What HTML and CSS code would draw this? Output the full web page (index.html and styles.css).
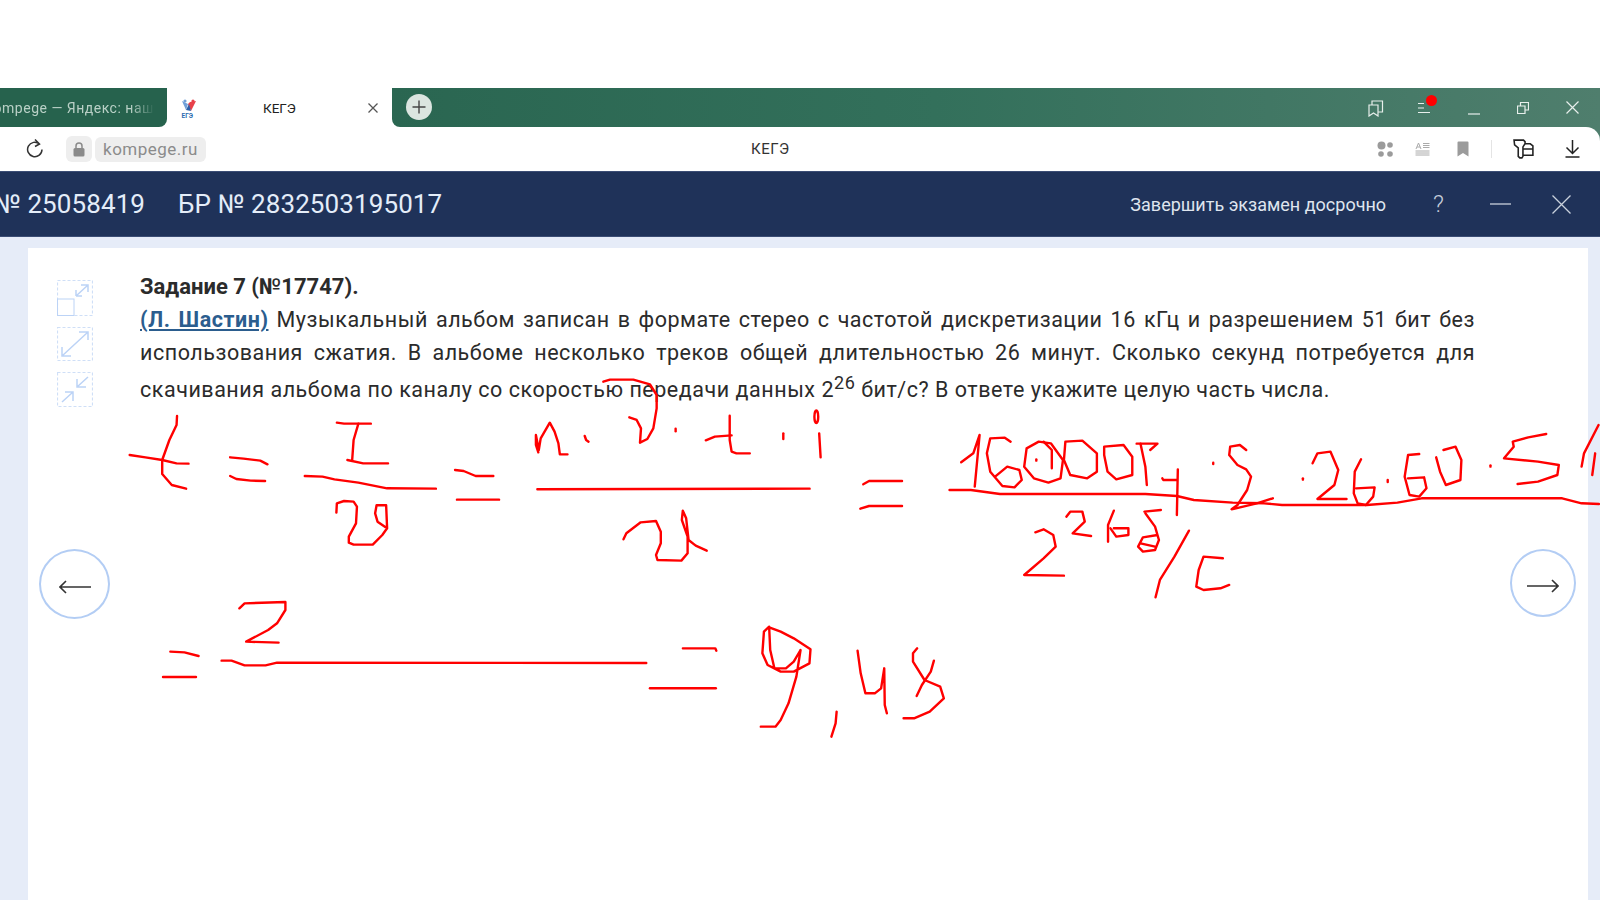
FILE: index.html
```html
<!DOCTYPE html>
<html lang="ru">
<head>
    <meta charset="UTF-8">
    <title>КЕГЭ</title>
    <link rel="stylesheet" href="styles.css">
</head>
<body>
    <div class="blank"></div>

    <div class="tabbar">
        <div class="tab-old"><span class="tab-old-text">kompege — Яндекс: нашлось</span></div>
        <div class="tab-active">
            <svg class="favicon" width="16" height="20" viewBox="0 0 16 20">
                <circle cx="4" cy="3" r="1.6" fill="#6f9fd8"/>
                <circle cx="12" cy="3" r="1.6" fill="#e8404a"/>
                <path d="M1 3 L5 12 L7 6Z" fill="#6f9fd8"/>
                <path d="M15 3 L10 13 L7 6 L9 4Z" fill="#e8404a"/>
                <path d="M5 12 L10 13 L8 6Z" fill="#2b5ea8"/>
                <text x="0.5" y="19.5" class="favicon-text">ЕГЭ</text>
            </svg>
            <span class="tab-title">КЕГЭ</span>
            <svg class="tab-close" width="12" height="12" viewBox="0 0 12 12"><path d="M1.5 1.5 L10.5 10.5 M10.5 1.5 L1.5 10.5"/></svg>
        </div>
        <div class="tab-rest">
            <div class="tab-new">
                <svg width="14" height="14" viewBox="0 0 14 14"><path d="M7 0.5 V13.5 M0.5 7 H13.5"/></svg>
            </div>
            <div class="win-icons">
                <svg class="win-icon" width="16" height="18" viewBox="0 0 16 18"><path d="M1 6 H10 V17 L5.5 14 L1 17Z M4 6 V2 H14.5 V13 H10"/></svg>
                <div class="menu-icon">
                    <svg width="13" height="12" viewBox="0 0 13 12"><path d="M0 1.5 H6 M0 6 H6 M0 10.5 H12"/></svg>
                    <span class="red-dot"></span>
                </div>
                <svg class="win-icon win-min" width="12" height="12" viewBox="0 0 12 12"><path d="M0 11 H12"/></svg>
                <svg class="win-icon" width="12" height="12" viewBox="0 0 12 12"><path d="M0.5 4 H8 V11.5 H0.5Z M3.5 4 V0.5 H11.5 V8 H8"/></svg>
                <svg class="win-icon" width="13" height="13" viewBox="0 0 13 13"><path d="M0.5 0.5 L12.5 12.5 M12.5 0.5 L0.5 12.5"/></svg>
            </div>
        </div>
    </div>

    <div class="toolbar-bg">
        <div class="toolbar">
            <svg class="reload" width="18" height="20" viewBox="0 0 18 20"><path d="M13.5 5 A7.2 7.2 0 1 0 16 10.5 M9 0.5 L13.5 5 L9 7.5"/></svg>
            <div class="lock">
                <svg width="12" height="15" viewBox="0 0 12 15"><path d="M3 7 V4 A3 3 0 0 1 9 4 V7" class="lock-arc"/><rect x="0.5" y="6" width="11" height="8.5" rx="1.5"/></svg>
            </div>
            <div class="url">kompege.ru</div>
            <div class="page-title">КЕГЭ</div>
            <div class="tool-icons">
                <svg width="16" height="16" viewBox="0 0 16 16" class="gray-icon"><circle cx="4.5" cy="4.5" r="4"/><circle cx="13" cy="4" r="2.8"/><circle cx="4" cy="13" r="2.8"/><circle cx="13" cy="13" r="2.8"/></svg>
                <svg width="15" height="14" viewBox="0 0 15 14" class="lines-icon"><path d="M1 7 L3.5 1 L6 7 M2 5 H5 M8 1.5 H14.5 M8 3.5 H14.5 M8 5.5 H14.5 M0.5 9 H14.5 M0.5 11 H14.5 M0.5 13 H14.5"/></svg>
                <svg width="12" height="16" viewBox="0 0 12 16" class="gray-icon book-icon"><path d="M0.5 1.5 Q0.5 0.5 1.5 0.5 H10.5 Q11.5 0.5 11.5 1.5 V15.5 L6 12 L0.5 15.5Z"/></svg>
                <span class="tool-sep"></span>
                <svg width="22" height="22" viewBox="0 0 21 20" class="dark-icon key-icon"><path d="M1 1.5 H10 L11.5 3 V5 L9.5 8 V17 L8.5 18.5 H6.5 L5 17 V9 L1.5 6 Z M11 5 H16.5 L19 7 V16 H9.5 M9.5 10 H19"/></svg>
                <svg width="15" height="18" viewBox="0 0 15 18" class="dark-icon dl-icon"><path d="M7.5 0 V13 M1.5 7.5 L7.5 13.5 L13.5 7.5 M0.5 17 H14.5"/></svg>
            </div>
        </div>
    </div>

    <header class="examhead">
        <span class="exam-num">№ 25058419</span>
        <span class="exam-br">БР № 2832503195017</span>
        <span class="exam-finish">Завершить экзамен досрочно</span>
        <span class="exam-help">?</span>
        <svg class="exam-min" width="21" height="2" viewBox="0 0 21 2"><path d="M0 1 H21"/></svg>
        <svg class="exam-close" width="19" height="19" viewBox="0 0 19 19"><path d="M0.5 0.5 L18.5 18.5 M18.5 0.5 L0.5 18.5"/></svg>
    </header>

    <main class="main">
        <div class="card">
            <div class="side">
                <div class="zoom-tools">
                    <svg class="zoom-box" width="36" height="36" viewBox="0 0 36 36"><rect class="dash" x="0.5" y="0.5" width="35" height="35"/><rect class="solid thin" x="0.5" y="19" width="16.5" height="16.5"/><path class="solid" d="M19 16 L31 5 M24 5 H31 V12 M19 16 V10 M19 16 H25"/></svg>
                    <svg class="zoom-box" width="36" height="34" viewBox="0 0 36 34"><rect class="dash" x="0.5" y="0.5" width="35" height="33"/><path class="solid" d="M5 29 L31 5 M22 5 H31 V13 M5 20 V29 H14"/></svg>
                    <svg class="zoom-box" width="36" height="35" viewBox="0 0 36 35"><rect class="dash" x="0.5" y="0.5" width="35" height="34"/><path class="solid" d="M31 5 L20 15 M20 7 V15 H29 M5 30 L16 20 M8 20 H16 V29"/></svg>
                </div>
                <div class="nav-circle">
                    <svg width="32" height="14" viewBox="0 0 32 14"><path d="M32 7 H1 M7 1 L1 7 L7 13"/></svg>
                </div>
            </div>
            <div class="task">
                <div class="task-title">Задание 7 (№17747).</div>
                <p class="task-text"><a class="author" href="#">(Л. Шастин)</a> Музыкальный альбом записан в формате стерео с частотой дискретизации 16 кГц и разрешением 51 бит без использования сжатия. В альбоме несколько треков общей длительностью 26 минут. Сколько секунд потребуется для скачивания альбома по каналу со скоростью передачи данных 2<sup>26</sup> бит/с? В ответе укажите целую часть числа.</p>
            </div>
            <div class="side-right">
                <div class="nav-circle nav-next">
                    <svg width="32" height="14" viewBox="0 0 32 14"><path d="M0 7 H31 M25 1 L31 7 L25 13"/></svg>
                </div>
            </div>
        </div>
    </main>

    <!-- handwritten notes on top of the page -->
    <svg class="ink" width="1600" height="900" viewBox="0 0 1600 900">
        <g transform="translate(100 400) scale(0.4785 0.3333)">
            <polyline points="161,48 160,75 145,120 130,180 130,222 150,255 180,266"/>
            <polyline points="62,165 95,172 130,180 160,190 185,191"/>
            <polyline points="272,172 300,176 335,182 350,193"/>
            <polyline points="272,228 285,237 315,242 345,243"/>
            <polyline points="495,68 510,71 566,71"/>
            <polyline points="540,71 530,120 527,180"/>
            <polyline points="517,180 550,190 602,190"/>
            <polyline points="428,228 465,230 490,238 540,248 600,265 702,266"/>
            <polyline points="494,338 495,310 510,303 530,305 537,320 535,370 520,410 520,428 530,434 570,434 590,405 600,385 580,365 575,340 578,316 598,316 600,385"/>
            <polyline points="742,210 760,213 785,228 822,228"/>
            <polyline points="746,299 834,299"/>
            <polyline points="916,157 911,135 911,105 917,150 921,115 940,68 950,95 958,130 961,163 977,163"/>
            <polyline points="1013,108 1016,120 1021,125"/>
            <polyline points="1203,86 1203,94"/>
            <polyline points="1428,100 1428,117"/>
            <polyline points="1316,47 1316,120 1320,155 1330,160 1358,160"/>
            <polyline points="1266,121 1285,110 1320,106"/>
            <ellipse cx="1497" cy="50" rx="4" ry="19"/>
            <polyline points="1503,100 1506,172"/>
            <polyline points="914,268 1483,266"/>
            <polyline points="1094,418 1100,400 1130,367 1162,363 1172,395 1172,430 1162,465 1165,480 1215,482 1228,460 1228,410 1216,360 1218,332 1225,355 1230,420 1245,437 1268,452"/>
        </g>
        <g transform="translate(560 365) scale(0.3333)">
            <polyline points="130,50 150,44 220,44 270,58 290,90 290,130 280,190 262,222 240,233 243,190 230,165 208,157"/>
        </g>
        <g transform="translate(840 400) scale(0.4847 0.3333)">
            <polyline points="48,253 60,243 128,243"/>
            <polyline points="42,326 60,318 128,318"/>
            <polyline points="250,187 275,160 288,105 278,260"/>
            <polyline points="352,125 340,113 310,115 303,160 310,215 335,258 360,262 375,240 370,210 345,200 320,230"/>
            <polyline points="410,125 385,145 380,200 400,235 430,248 455,235 460,180 435,130 410,125"/>
            <polyline points="420,125 437,150 437,205"/>
            <polyline points="465,125 500,122 530,160 530,215 510,235 475,225 462,180 465,125"/>
            <polyline points="545,140 585,135 603,170 603,225 570,238 552,215 545,165 545,140"/>
            <polyline points="612,131 655,131 640,150"/>
            <polyline points="620,131 630,200 633,255"/>
            <polyline points="665,235 667,240 695,240"/>
            <polyline points="697,208 695,345"/>
            <polyline points="226,270 270,270 330,282 630,282 695,288 730,300 810,308 875,310 912,315 1087,315 1150,308 1200,295 1490,295 1530,310 1566,312"/>
            <polyline points="838,150 825,135 805,140 803,165 820,195 838,208 848,230 840,270 820,315 808,328 860,310 893,295"/>
            <polyline points="770,188 770,192"/>
            <polyline points="955,235 955,239"/>
            <polyline points="1130,240 1130,246"/>
            <polyline points="1342,196 1342,200"/>
            <polyline points="405,178 405,182"/>
            <polyline points="975,190 985,160 1012,155 1028,210 1020,255 985,297 1045,297"/>
            <polyline points="1075,178 1062,215 1060,280 1068,310 1085,315 1100,290 1103,262 1065,265"/>
            <polyline points="1195,162 1172,165 1165,230 1175,285 1195,290 1210,265 1205,232 1172,235"/>
            <polyline points="1245,150 1270,140 1282,180 1280,240 1250,255 1238,215 1230,172"/>
            <polyline points="1457,102 1420,112 1388,125 1390,140 1370,175 1440,185 1483,195 1480,225 1440,245 1398,252"/>
            <polyline points="1565,75 1535,160 1530,200"/>
            <polyline points="1552,225 1558,160"/>
            <polyline points="403,397 420,388 440,405 445,440 420,475 380,525 462,527"/>
            <polyline points="467,350 475,335 500,335 505,365 480,400 518,408"/>
            <polyline points="565,332 553,375 553,425"/>
            <polyline points="558,385 570,410 595,405 595,385 565,385"/>
            <polyline points="628,335 662,330"/>
            <polyline points="630,340 650,380 658,420 650,450 625,455 615,440 625,412 655,405"/>
            <polyline points="620,430 650,440"/>
            <polyline points="720,392 690,470 660,540 651,592"/>
            <polyline points="790,475 750,470 740,510 735,560 750,570 785,565 803,555"/>
        </g>
        <g transform="translate(140 590) scale(0.523 0.3333)">
            <polyline points="58,185 85,187 112,198"/>
            <polyline points="44,261 107,261"/>
            <polyline points="190,55 200,40 278,36 278,60 262,100 245,120 203,155 265,158"/>
            <polyline points="156,212 175,212 200,226 240,226 262,218 968,219"/>
            <polyline points="1038,175 1100,175 1102,182"/>
            <polyline points="975,295 1101,295"/>
            <polyline points="1203,110 1193,125 1190,190 1200,225 1225,245 1250,245 1280,220 1282,178 1250,145 1225,125 1203,112 1205,180 1213,235 1235,235 1250,215 1263,180 1255,260 1240,340 1225,390 1215,410 1187,410"/>
            <polyline points="1332,365 1330,400 1322,440"/>
            <polyline points="1372,182 1378,250 1387,310 1405,310 1417,295 1423,235 1424,345 1428,370"/>
            <polyline points="1486,175 1478,190 1478,215 1500,270 1530,290 1537,325 1510,365 1480,385 1460,385"/>
            <polyline points="1518,212 1512,245 1495,285 1485,318"/>
        </g>
    </svg>
</body>
</html>
```

FILE: styles.css
```css
html, body {
    margin: 0;
    padding: 0;
    height: 100%;
    overflow: hidden;
    background: white;
    font-family: Roboto, "Liberation Sans", sans-serif;
}
.blank {
    height: 88px;
}

/* browser tabs */
.tabbar {
    height: 39px;
    display: flex;
    align-items: stretch;
    background: white;
    overflow: hidden;
}
.tab-old {
    width: 167px;
    flex: none;
    background: #26624d;
    border-radius: 0 0 8px 0;
    overflow: hidden;
    display: flex;
    align-items: center;
}
.tab-old-text {
    margin-left: -14px;
    width: 172px;
    flex: none;
    white-space: nowrap;
    overflow: hidden;
    font-size: 14px;
    letter-spacing: 0.5px;
    color: #b9d0c6;
    -webkit-mask-image: linear-gradient(90deg, #000 84%, transparent 98%);
    mask-image: linear-gradient(90deg, #000 84%, transparent 98%);
}
.tab-active {
    width: 225px;
    flex: none;
    background: white;
    border-radius: 8px 8px 0 0;
    display: flex;
    align-items: center;
    box-sizing: border-box;
    padding: 0 13px 0 14px;
}
.favicon-text {
    font-size: 6.5px;
    font-weight: bold;
    fill: #2b6cb0;
    font-family: Roboto, sans-serif;
}
.tab-title {
    margin-left: 66px;
    font-size: 13.5px;
    color: #222;
    flex: 1;
}
.tab-close path {
    fill: none;
    stroke: #555;
    stroke-width: 1.3;
}
.tab-rest {
    flex: 1;
    display: flex;
    align-items: stretch;
    background: linear-gradient(90deg, #2a6651 0%, #33705b 45%, #4f7e6d 100%);
    border-radius: 0 0 0 8px;
}
.tab-new {
    width: 26px;
    height: 26px;
    margin: 6px 0 0 14px;
    border-radius: 50%;
    background: #dbe5e0;
    display: flex;
    align-items: center;
    justify-content: center;
}
.tab-new path {
    fill: none;
    stroke: #444;
    stroke-width: 1.4;
}
.win-icons {
    margin-left: auto;
    display: flex;
    align-items: center;
    padding-right: 21px;
}
.win-icon path {
    fill: none;
    stroke: #e8efec;
    stroke-width: 1.2;
}
.win-icon {
    margin-left: 37px;
}
.win-min {
    margin-top: 3px;
}
.menu-icon {
    position: relative;
    margin-left: 34px;
    width: 13px;
    height: 12px;
    display: flex;
}
.menu-icon path {
    fill: none;
    stroke: #e8efec;
    stroke-width: 1.2;
}
.red-dot {
    position: absolute;
    left: 8px;
    top: -7px;
    width: 11px;
    height: 11px;
    border-radius: 50%;
    background: #ff0000;
}

/* address bar */
.toolbar-bg {
    background: #4f7e6d;
}
.toolbar {
    height: 44px;
    box-sizing: border-box;
    display: flex;
    align-items: center;
    background: white;
    padding-left: 26px;
    border-radius: 0 14px 0 0;
}
.reload path {
    fill: none;
    stroke: #333;
    stroke-width: 1.5;
}
.lock {
    width: 26px;
    height: 26px;
    margin-left: 22px;
    background: #eeeeee;
    border-radius: 6px;
    display: flex;
    align-items: center;
    justify-content: center;
}
.lock rect {
    fill: #8a8a8a;
}
.lock-arc {
    fill: none;
    stroke: #8a8a8a;
    stroke-width: 1.5;
}
.url {
    width: 111px;
    height: 25px;
    margin-left: 3px;
    line-height: 25px;
    text-align: center;
    background: #eeeeee;
    border-radius: 6px;
    font-size: 17px;
    letter-spacing: 0.5px;
    color: #8b8b8b;
}
.page-title {
    margin-left: 545px;
    font-size: 15px;
    letter-spacing: 0.5px;
    color: #333;
}
.tool-icons {
    margin-left: auto;
    display: flex;
    align-items: center;
    padding-right: 20px;
    gap: 22px;
}
.gray-icon {
    fill: #9b9b9b;
}
.lines-icon path {
    fill: none;
    stroke: #aaaaaa;
    stroke-width: 1;
}
.book-icon {
    margin-left: 5px;
}
.tool-sep {
    width: 1px;
    height: 18px;
    background: #e4e4e4;
}
.key-icon {
    margin-left: -1px;
}
.dl-icon {
    margin-left: 8px;
}
.dark-icon path {
    fill: none;
    stroke: #222;
    stroke-width: 1.5;
}

/* exam header */
.examhead {
    height: 66px;
    box-sizing: border-box;
    background: #1f3259;
    border-top: 1px solid #3b4d75;
    border-bottom: 1px solid #3b4d75;
    color: #e4edf9;
    display: flex;
    align-items: center;
}
.exam-num {
    margin-left: -6px;
    font-size: 26px;
    letter-spacing: 0.1px;
}
.exam-br {
    margin-left: 33px;
    font-size: 26px;
    letter-spacing: 0.1px;
}
.exam-finish {
    margin-left: auto;
    font-size: 18px;
    color: #dfe5ee;
}
.exam-help {
    margin-left: 47px;
    font-size: 24px;
    font-weight: 300;
    color: #c4ccd9;
}
.exam-min {
    margin-left: 46px;
}
.exam-min path, .exam-close path {
    fill: none;
    stroke: #c9d1dc;
    stroke-width: 1.3;
}
.exam-close {
    margin-left: 41px;
    margin-right: 29px;
}

/* task area */
.main {
    height: 663px;
    background: #e6ecf8;
    box-sizing: border-box;
    padding: 11px 12px 0 28px;
}
.card {
    height: 100%;
    background: white;
    display: flex;
}
.side {
    width: 112px;
    flex: none;
    box-sizing: border-box;
    padding: 32px 0 0 11px;
}
.zoom-tools {
    display: flex;
    flex-direction: column;
    align-items: flex-start;
    margin-left: 18px;
    gap: 11px;
}
.zoom-box {
    display: block;
}
.dash {
    fill: none;
    stroke: #cfdff7;
    stroke-width: 1.2;
    stroke-dasharray: 3 2;
}
.solid {
    fill: none;
    stroke: #bcd3f6;
    stroke-width: 1.5;
}
.thin {
    stroke-width: 1;
}
.nav-circle {
    width: 71px;
    height: 70px;
    box-sizing: border-box;
    padding-top: 6px;
    border: 2px solid #b3cdf4;
    border-radius: 50%;
    background: white;
    display: flex;
    align-items: center;
    justify-content: center;
}
.nav-next {
    width: 66px;
    height: 68px;
}
.nav-circle path {
    fill: none;
    stroke: #333;
    stroke-width: 1.6;
}
.side .nav-circle {
    margin-top: 142px;
}
.task {
    width: 1335px;
    flex: none;
    padding-top: 26px;
    color: #2b2b2b;
    font-size: 21.5px;
}
.task-title {
    font-weight: bold;
    font-size: 22px;
    line-height: 26px;
}
.task-text {
    margin: 3px 0 0;
    text-align: justify;
    line-height: 33px;
    letter-spacing: 0.53px;
}
.task-text sup {
    font-size: 18px;
    line-height: 28px;
}
.author {
    color: #2b5d8e;
    font-weight: bold;
    text-decoration: underline;
}
.side-right {
    flex: 1;
    box-sizing: border-box;
    padding: 301px 0 0 35px;
}

.ink {
    position: absolute;
    left: 0;
    top: 0;
    pointer-events: none;
}
.ink polyline, .ink ellipse {
    fill: none;
    stroke: #ff0000;
    stroke-width: 2.4;
    stroke-linejoin: round;
    stroke-linecap: round;
    vector-effect: non-scaling-stroke;
}
```
